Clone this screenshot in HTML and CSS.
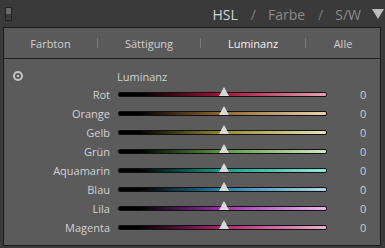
FILE: index.html
```html
<!DOCTYPE html>
<html lang="de">
<head>
    <meta charset="UTF-8">
    <title>HSL / Farbe / S/W</title>
    <link rel="stylesheet" href="styles.css">
</head>
<body>
    <div class="header">
        <div class="switch"><span></span></div>
        <div class="modes">
            <span class="mode active">HSL</span>
            <span class="slash">/</span>
            <span class="mode">Farbe</span>
            <span class="slash">/</span>
            <span class="mode">S/W</span>
            <span class="arrow"></span>
        </div>
    </div>

    <div class="panel">
        <div class="tabs">
            <div class="tab t1">Farbton</div>
            <div class="sep"></div>
            <div class="tab t2">Sättigung</div>
            <div class="sep"></div>
            <div class="tab t3 active">Luminanz</div>
            <div class="sep"></div>
            <div class="tab t4">Alle</div>
        </div>

        <div class="content">
            <div class="title-row">
                <span class="target"></span>
                <span class="title">Luminanz</span>
            </div>
            <div class="row"><span class="label">Rot</span><div class="track red"><span class="thumb"></span></div><span class="value">0</span></div>
            <div class="row"><span class="label">Orange</span><div class="track orange"><span class="thumb"></span></div><span class="value">0</span></div>
            <div class="row"><span class="label">Gelb</span><div class="track yellow"><span class="thumb"></span></div><span class="value">0</span></div>
            <div class="row"><span class="label">Grün</span><div class="track green"><span class="thumb"></span></div><span class="value">0</span></div>
            <div class="row"><span class="label">Aquamarin</span><div class="track aqua"><span class="thumb"></span></div><span class="value">0</span></div>
            <div class="row"><span class="label">Blau</span><div class="track blue"><span class="thumb"></span></div><span class="value">0</span></div>
            <div class="row"><span class="label">Lila</span><div class="track purple"><span class="thumb"></span></div><span class="value">0</span></div>
            <div class="row"><span class="label">Magenta</span><div class="track magenta"><span class="thumb"></span></div><span class="value">0</span></div>
        </div>
    </div>
</body>
</html>
```

FILE: styles.css
```css
body {
    margin: 0;
    width: 385px;
    height: 248px;
    overflow: hidden;
    background-color: #3a3a3a;
    font-family: 'Open Sans', 'DejaVu Sans', sans-serif;
    color: #c8c8c8;
}
.header {
    height: 27px;
    display: flex;
    align-items: center;
    justify-content: space-between;
    padding: 0 1px 0 5px;
}
.switch {
    width: 7px;
    height: 14px;
    background-color: #6a6a6a;
    border: 1px solid #222;
    box-sizing: border-box;
    display: flex;
    align-items: flex-end;
}
.switch span {
    display: block;
    width: 100%;
    height: 6px;
    background-color: #3c3c3c;
}
.modes {
    display: flex;
    align-items: center;
    font-size: 14px;
    color: #8a8a8a;
    padding-top: 1px;
}
.mode.active {
    color: #d6d6d6;
}
.slash {
    margin: 0 12px 0 13px;
    color: #7a7a7a;
}
.arrow {
    width: 0;
    height: 0;
    margin-left: 11px;
    border-left: 6px solid transparent;
    border-right: 6px solid transparent;
    border-top: 10px solid #bdbdbd;
}
.panel {
    margin: 0 4px 0 3px;
    height: 217px;
    border: 1px solid #1c1c1c;
    background-color: #5b5b5b;
}
.tabs {
    height: 30px;
    display: flex;
    align-items: center;
    border-bottom: 1px solid #1c1c1c;
    background-color: #5a5a5a;
    font-size: 11px;
    color: #cfcfcf;
}
.tab {
    text-align: center;
}
.t1 { width: 93px; }
.t2 { width: 102px; }
.t3 { width: 104px; }
.t4 { width: 74px; }
.tab.active {
    color: #f2f2f2;
}
.sep {
    width: 1px;
    height: 10px;
    background-color: #7a7a7a;
}
.content {
    padding-top: 8px;
}
.title-row {
    height: 18px;
    display: flex;
    align-items: center;
    font-size: 11px;
    color: #d0d0d0;
}
.target {
    width: 6px;
    height: 6px;
    margin-left: 9px;
    border: 2px solid #c4c4c4;
    border-radius: 50%;
    position: relative;
}
.target::after {
    content: "";
    position: absolute;
    left: 2px;
    top: 2px;
    width: 2px;
    height: 2px;
    background-color: #c4c4c4;
}
.title {
    margin-left: 94px;
}
.row {
    height: 19px;
    display: flex;
    align-items: center;
    font-size: 11px;
}
.label {
    width: 106px;
    text-align: right;
    color: #d2d2d2;
}
.track {
    position: relative;
    margin-left: 8px;
    width: 207px;
    height: 3px;
    border: 1px solid #111;
    border-radius: 2px;
}
.thumb {
    position: absolute;
    left: 100px;
    top: -6px;
    width: 0;
    height: 0;
    border-left: 5px solid transparent;
    border-right: 5px solid transparent;
    border-bottom: 9px solid #d9d9d9;
}
.value {
    margin-left: 33px;
    color: #cfcfcf;
}
.red { background: linear-gradient(to right, #000 10%, #a8103a 50%, #e8a0b4); }
.orange { background: linear-gradient(to right, #000 10%, #946630 50%, #e8d4b0); }
.yellow { background: linear-gradient(to right, #000 10%, #948c30 50%, #e8e4b8); }
.green { background: linear-gradient(to right, #000 10%, #5c9a40 50%, #d4e8c0); }
.aqua { background: linear-gradient(to right, #000 10%, #10a090 50%, #90ecdc); }
.blue { background: linear-gradient(to right, #000 10%, #2880a8 50%, #b0d8ec); }
.purple { background: linear-gradient(to right, #000 10%, #a030b0 50%, #ecb8ec); }
.magenta { background: linear-gradient(to right, #000 10%, #b82070 50%, #ecb0cc); }
```
